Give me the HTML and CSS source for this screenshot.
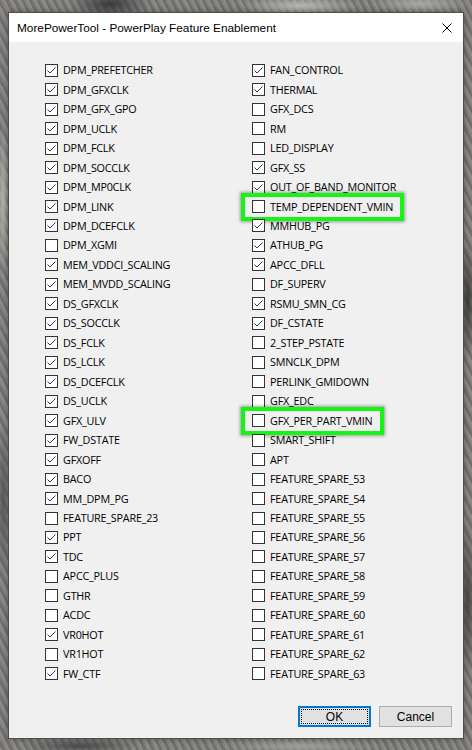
FILE: index.html
```html
<!DOCTYPE html>
<html>
<head>
<meta charset="utf-8">
<link rel="stylesheet" href="styles.css">
</head>
<body>
<div class="window">
  <div class="titlebar">
    <span class="title">MorePowerTool - PowerPlay Feature Enablement</span>
    <svg class="close" width="10" height="10" viewBox="0 0 10 10"><path d="M0.5 0.5L9.5 9.5M9.5 0.5L0.5 9.5" stroke="#000" stroke-width="1" fill="none"/></svg>
  </div>
  <div class="content">
    <div class="col" id="left"></div>
    <div class="col" id="right"></div>
  </div>
  <div class="footer">
    <button class="btn ok"><span class="focus">OK</span></button>
    <button class="btn">Cancel</button>
  </div>
</div>
<script src="app.js"></script>
</body>
</html>
```

FILE: app.js
```js
const left = [
 ["DPM_PREFETCHER",1],["DPM_GFXCLK",1],["DPM_GFX_GPO",1],["DPM_UCLK",1],["DPM_FCLK",1],["DPM_SOCCLK",1],["DPM_MP0CLK",1],["DPM_LINK",1],["DPM_DCEFCLK",1],["DPM_XGMI",0],["MEM_VDDCI_SCALING",1],["MEM_MVDD_SCALING",1],["DS_GFXCLK",1],["DS_SOCCLK",1],["DS_FCLK",1],["DS_LCLK",1],["DS_DCEFCLK",1],["DS_UCLK",1],["GFX_ULV",1],["FW_DSTATE",1],["GFXOFF",1],["BACO",1],["MM_DPM_PG",1],["FEATURE_SPARE_23",0],["PPT",1],["TDC",1],["APCC_PLUS",0],["GTHR",0],["ACDC",0],["VR0HOT",1],["VR1HOT",0],["FW_CTF",1]
];
const right = [
 ["FAN_CONTROL",1],["THERMAL",1],["GFX_DCS",0],["RM",0],["LED_DISPLAY",0],["GFX_SS",1],["OUT_OF_BAND_MONITOR",1],["TEMP_DEPENDENT_VMIN",0,1],["MMHUB_PG",1],["ATHUB_PG",1],["APCC_DFLL",1],["DF_SUPERV",0],["RSMU_SMN_CG",1],["DF_CSTATE",1],["2_STEP_PSTATE",0],["SMNCLK_DPM",0],["PERLINK_GMIDOWN",0],["GFX_EDC",0],["GFX_PER_PART_VMIN",0,1],["SMART_SHIFT",0],["APT",0]
];
for (let i = 53; i <= 63; i++) right.push(["FEATURE_SPARE_" + i, 0]);
const check = '<svg width="11" height="11" viewBox="0 0 11 11"><path d="M1.5 5.5L4 8L9.5 2.5" stroke="#3a3a3a" stroke-width="1" fill="none"/></svg>';
function fill(id, list) {
  const el = document.getElementById(id);
  el.innerHTML = list.map(([n, c, h]) =>
    '<div class="row"><label class="item' + (h ? ' hl' : '') + '"><span class="box">' + (c ? check : '') + '</span><span class="lbl">' + n + '</span></label></div>'
  ).join('');
}
fill('left', left);
fill('right', right);
```

FILE: styles.css
```css
html, body { margin: 0; padding: 0; }
body {
  width: 472px;
  height: 750px;
  overflow: hidden;
  font-family: "Liberation Sans", Arial, sans-serif;
  background-color: #7e7c79;
  background-image:
    radial-gradient(ellipse 40px 14px at 110px 4px, #3a3a3a 0%, rgba(58,58,58,0) 100%),
    radial-gradient(ellipse 60px 10px at 300px 6px, #b8b6b2 0%, rgba(184,182,178,0) 100%),
    radial-gradient(ellipse 50px 10px at 420px 4px, #a9a7a3 0%, rgba(169,167,163,0) 100%),
    radial-gradient(ellipse 8px 60px at 468px 300px, #3c3c3b 0%, rgba(60,60,59,0) 100%),
    radial-gradient(ellipse 8px 80px at 468px 600px, #4a4948 0%, rgba(74,73,72,0) 100%),
    radial-gradient(ellipse 6px 80px at 3px 200px, #b5b3af 0%, rgba(181,179,175,0) 100%),
    radial-gradient(ellipse 6px 80px at 3px 500px, #5b5a58 0%, rgba(91,90,88,0) 100%),
    radial-gradient(ellipse 60px 8px at 80px 746px, #4a4a49 0%, rgba(74,74,73,0) 100%),
    radial-gradient(ellipse 80px 8px at 300px 746px, #9f9d99 0%, rgba(159,157,153,0) 100%),
    repeating-linear-gradient(63deg, rgba(255,255,255,0.12) 0 2px, rgba(0,0,0,0.1) 2px 5px, rgba(255,255,255,0.05) 5px 7px);
}
.window {
  box-sizing: border-box;
  margin: 12px 0 0 8px;
  width: 456px;
  height: 727px;
  border: 1px solid #4e4e4e;
  background: #f0f0f0;
  display: flex;
  flex-direction: column;
  box-shadow: 0 0 6px rgba(0,0,0,0.35);
}
.titlebar {
  height: 29px;
  background: #fff;
  display: flex;
  align-items: center;
  justify-content: space-between;
  padding: 0 11px 0 8px;
  flex: none;
}
.title { font-size: 11.8px; color: #000; padding-top: 1px; }
.close { display: block; margin-top: 1px; }
.content {
  flex: 1;
  display: flex;
  padding: 18.5px 0 0 36px;
}
.col { display: flex; flex-direction: column; }
#left { width: 207px; }
.row { height: 19.48px; display: flex; align-items: center; }
.item {
  display: inline-flex; align-items: center; position: relative; color: #000;
  font-family: "Open Sans", "Noto Sans", sans-serif; font-size: 10.8px; letter-spacing: -0.22px;
}
.box {
  box-sizing: border-box;
  width: 13px; height: 13px;
  border: 1px solid #333;
  background: #fff;
  margin-right: 5px;
  display: flex; align-items: center; justify-content: center;
}
.box svg { display: block; }
.lbl { line-height: 14px; }
.hl::after {
  content: "";
  position: absolute;
  left: -11px; right: -11px; top: -7px; bottom: -7px;
  border: 4px solid #17f217;
  box-shadow: 0 0 3px 1px rgba(0,0,0,0.35);
}
.footer {
  flex: none;
  display: flex;
  justify-content: flex-end;
  gap: 8px;
  padding: 0 11px 11px 0;
}
.btn {
  box-sizing: border-box;
  width: 73px; height: 21px;
  background: #e1e1e1;
  border: 1px solid #adadad;
  font-family: "Liberation Sans", Arial, sans-serif;
  font-size: 12px;
  color: #000;
  padding: 0;
  margin: 0;
  display: flex; align-items: center; justify-content: center;
}
.btn.ok { border: 1px solid #0078d7; box-shadow: inset 0 0 0 1px #0078d7; padding: 2px; }
.focus { flex: 1; align-self: stretch; border: 1px dotted #000; display: flex; align-items: center; justify-content: center; }
```
